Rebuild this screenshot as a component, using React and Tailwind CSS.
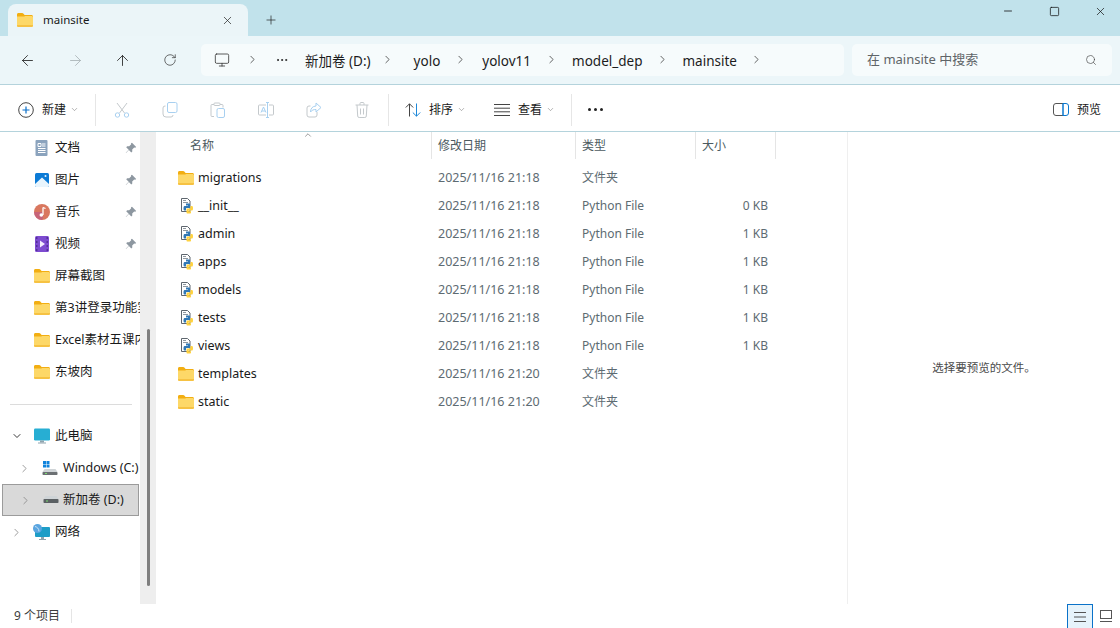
import { ArrowLeft, ArrowRight, ArrowUp, RotateCw, ChevronRight, ChevronDown, ChevronUp, X, Plus, Minus, Square, Search, Monitor, Ellipsis } from "lucide-react";

const FONT = "font-['Noto_Sans','Noto_Sans_CJK_SC',sans-serif]";

const files = [
  { name: "migrations", date: "2025/11/16 21:18", type: "文件夹", folder: true },
  { name: "__init__", date: "2025/11/16 21:18", type: "Python File", size: "0 KB" },
  { name: "admin", date: "2025/11/16 21:18", type: "Python File", size: "1 KB" },
  { name: "apps", date: "2025/11/16 21:18", type: "Python File", size: "1 KB" },
  { name: "models", date: "2025/11/16 21:18", type: "Python File", size: "1 KB" },
  { name: "tests", date: "2025/11/16 21:18", type: "Python File", size: "1 KB" },
  { name: "views", date: "2025/11/16 21:18", type: "Python File", size: "1 KB" },
  { name: "templates", date: "2025/11/16 21:20", type: "文件夹", folder: true },
  { name: "static", date: "2025/11/16 21:20", type: "文件夹", folder: true },
];

function FolderIcon() {
  return (
    <svg width="16" height="14" viewBox="0 0 16 14" className="shrink-0">
      <path d="M0 1.500C0 .7.6 0 1.400 0h3.800c.5 0 .8.2 1.100.5L7.600 2H14.500c.8 0 1.500.7 1.500 1.500V5H0z" fill="#f2ae12" />
      <path d="M0 3.600h6.600c.6 0 1-.2 1.400-.6h6.600c.8 0 1.400.6 1.400 1.400v8.100c0 .8-.6 1.500-1.400 1.500H1.400C.6 14 0 13.300 0 12.500z" fill="#fdd868" />
      <path d="M0 12.500c0 .8.6 1.500 1.400 1.500h13.200c.8 0 1.400-.7 1.400-1.500V12H0z" fill="#f6c243" />
    </svg>
  );
}

function PyIcon() {
  return (
    <svg width="16" height="16" viewBox="0 0 16 16" className="shrink-0">
      <path d="M3.500 .5h6l2.500 2.500v10.500h-8.500z" fill="#fff" stroke="#5e666e" />
      <path d="M5 2.500h3M5 4.500h5" stroke="#8f98a0" />
      <path d="M8 5.500h3c.6 0 1 .4 1 1V10H9c-.6 0-1 .4-1 1v1.500H6.500c-.6 0-1-.6-1-2s.4-2.500 1-2.500H10V7.500H8z" fill="#3178b5" />
      <path d="M12.500 8H14c.6 0 1 .8 1 2.200s-.4 2.300-1 2.300h-3.500v.7h2.500v1.300c0 .6-.4 1-1 1H9.500c-.6 0-1-.4-1-1V11.300c0-.4.300-.8.800-.8H12c.4 0 .5-.3.500-.7z" fill="#ffd23f" />
    </svg>
  );
}

function PinIcon() {
  return (
    <svg width="12" height="12" viewBox="0 0 12 12" className="shrink-0">
      <path d="M7 .8l4.200 4.200-1 .7-1-.2-2 2 .1 2-1 .9L3.900 8 1 11 .8 10.800 3.700 7.700 1.200 5.200l1-1 2 .1 2-2-.2-1z" fill="#8d97a0" />
    </svg>
  );
}

function QuickItem({ icon, label, pinned }) {
  return (
    <div className="h-8 flex items-center pl-[34px] text-[12.5px] text-[#1a1a1a] overflow-hidden whitespace-nowrap">
      <span className="w-4 flex justify-center shrink-0">{icon}</span>
      <span className="ml-[5px] flex-1 overflow-hidden">{label}</span>
      {pinned && <span className="mr-[3px]"><PinIcon /></span>}
    </div>
  );
}

function ToolIcon({ children }) {
  return <span className="w-[48px] flex justify-center items-center">{children}</span>;
}

function Crumb({ children }) {
  return <span className="text-[13.5px] text-[#1c1c1c] leading-none">{children}</span>;
}

function Sep() {
  return <ChevronRight size={13} strokeWidth={1.4} className="text-[#333] shrink-0" />;
}

export default function App() {
  return (
    <div className={`w-[1120px] h-[628px] overflow-hidden flex flex-col bg-white ${FONT}`}>
      {/* title bar */}
      <div className="h-9 shrink-0 bg-[#c1e2eb] flex items-end pl-2">
        <div className="w-[240px] h-8 bg-[#ebf5f8] rounded-t-lg flex items-center pl-[9px] pr-[14px]">
          <FolderIcon />
          <span className="ml-[10px] flex-1 text-[11.5px] text-[#1a1a1a]">mainsite</span>
          <X size={13} strokeWidth={1.3} className="text-[#222]" />
        </div>
        <div className="h-8 ml-4 flex items-center">
          <Plus size={14} strokeWidth={1.2} className="text-[#222]" />
        </div>
        <div className="flex-1 h-9 flex items-start justify-end">
          <span className="w-10 h-[22px] flex items-center justify-center"><Minus size={12} strokeWidth={1.6} className="text-[#111]" /></span>
          <span className="w-[52px] h-[22px] flex items-center justify-center"><Square size={11} strokeWidth={1.6} className="text-[#111]" /></span>
          <span className="w-10 h-[22px] flex items-center justify-center"><X size={13} strokeWidth={1.3} className="text-[#111]" /></span>
        </div>
      </div>

      {/* address row */}
      <div className="h-[49px] shrink-0 bg-[#ecf6f9] border-b border-[#b4d3dc] flex items-center">
        <div className="w-[201px] shrink-0 flex items-center pl-[3px]">
          <span className="w-12 flex justify-center"><ArrowLeft size={17} strokeWidth={1.2} className="text-[#222]" /></span>
          <span className="w-12 flex justify-center"><ArrowRight size={17} strokeWidth={1.2} className="text-[#a9b2b6]" /></span>
          <span className="w-[48px] flex justify-center -ml-[1px]"><ArrowUp size={17} strokeWidth={1.2} className="text-[#222]" /></span>
          <span className="w-[48px] flex justify-center"><RotateCw size={14} strokeWidth={1.2} className="text-[#333]" /></span>
        </div>
        <div className="w-[643px] h-8 shrink-0 bg-[#f6fbfc] rounded-[5px] flex items-center pl-[13px] mb-[1px]">
          <Monitor size={16} strokeWidth={1.2} className="text-[#333]" />
          <span className="ml-[16px]"><Sep /></span>
          <Ellipsis size={14} strokeWidth={1.6} className="ml-[16px] text-[#222]" />
          <span className="ml-[16px]"><Crumb>新加卷 (D:)</Crumb></span>
          <span className="ml-[10px]"><Sep /></span>
          <span className="ml-[20px]"><Crumb>yolo</Crumb></span>
          <span className="ml-[14px]"><Sep /></span>
          <span className="ml-[15px]"><Crumb>yolov11</Crumb></span>
          <span className="ml-[14px]"><Sep /></span>
          <span className="ml-[14px]"><Crumb>model_dep</Crumb></span>
          <span className="ml-[14px]"><Sep /></span>
          <span className="ml-[13px]"><Crumb>mainsite</Crumb></span>
          <span className="ml-[13px]"><Sep /></span>
        </div>
        <div className="w-[260px] h-8 ml-[8px] shrink-0 bg-[#f6fbfc] rounded-[5px] flex items-center justify-between pl-[15px] pr-[15px] mb-[1px]">
          <span className="text-[13px] text-[#5f6568]">在 mainsite 中搜索</span>
          <Search size={12} strokeWidth={1.3} className="text-[#444]" />
        </div>
      </div>

      {/* command bar */}
      <div className="h-[47px] shrink-0 bg-white border-b border-[#b4d3dc] flex items-center pt-[3px]">
        <div className="w-[95px] shrink-0 flex items-center pl-[18px]">
          <svg width="16" height="16" viewBox="0 0 16 16">
            <circle cx="8" cy="8" r="7.300" fill="none" stroke="#444" />
            <path d="M8 4.500v7M4.500 8h7" stroke="#0a6fc9" strokeWidth="1.200" />
          </svg>
          <span className="ml-[8px] text-xs text-[#1a1a1a]">新建</span>
          <ChevronDown size={9} strokeWidth={1.3} className="ml-[4px] text-[#666]" />
        </div>
        <div className="w-px h-8 bg-[#e6e6e6] shrink-0" />
        <div className="flex items-center shrink-0 w-[292px] pl-[2px]">
          <ToolIcon>
            <svg width="16" height="16" viewBox="0 0 16 16" fill="none">
              <path d="M3 1l7.500 10M13 1L5.500 11" stroke="#c4c9cc" />
              <circle cx="3.500" cy="13" r="2.200" stroke="#a8d0f0" />
              <circle cx="12.500" cy="13" r="2.200" stroke="#a8d0f0" />
            </svg>
          </ToolIcon>
          <ToolIcon>
            <svg width="16" height="16" viewBox="0 0 16 16" fill="none">
              <rect x="5.500" y=".5" width="9.500" height="10" rx="1.500" stroke="#a8d0f0" />
              <path d="M3.500 4H3a2 2 0 00-2 2v6a3 3 0 003 3h5a2 2 0 002-2" stroke="#c4c9cc" />
            </svg>
          </ToolIcon>
          <ToolIcon>
            <svg width="16" height="16" viewBox="0 0 16 16" fill="none">
              <path d="M4 2.500H2A1 1 0 001 3.500v10a1 1 0 001 1h2M10 2.500h2a1 1 0 011 1v2" stroke="#c4c9cc" />
              <rect x="4" y="1" width="6" height="2.500" rx=".8" stroke="#c4c9cc" />
              <rect x="7" y="6.500" width="7.500" height="9" rx="1.500" stroke="#a8d0f0" />
            </svg>
          </ToolIcon>
          <ToolIcon>
            <svg width="16" height="16" viewBox="0 0 16 16" fill="none" className="overflow-visible">
              <path d="M8 3H1.500a1 1 0 00-1 1v8a1 1 0 001 1H8M11 3h3.500a1 1 0 011 1v8a1 1 0 01-1 1H11" stroke="#c4c9cc" />
              <path d="M3 10.500L5.500 5 8 10.500M4 9h3" stroke="#a8d0f0" />
              <path d="M8 .5h3M8 15.500h3M9.500 .5v15" stroke="#a8d0f0" />
            </svg>
          </ToolIcon>
          <ToolIcon>
            <svg width="16" height="16" viewBox="0 0 16 16" fill="none">
              <path d="M11 10v3a2 2 0 01-2 2H3a2 2 0 01-2-2V6a2 2 0 012-2h1.500" stroke="#c4c9cc" />
              <path d="M10 1l5 4.500L10 10V7.500c-2.500 0-4 .5-5.500 2.500 0-3.500 2-5.800 5.500-6z" stroke="#a8d0f0" />
            </svg>
          </ToolIcon>
          <ToolIcon>
            <svg width="14" height="16" viewBox="0 0 14 16" fill="none">
              <path d="M.5 3h13M5 3V1.500A1 1 0 016 .5h2a1 1 0 011 1V3M2 3l.7 11a1.500 1.500 0 001.500 1.500h5.600a1.500 1.500 0 001.500-1.500L12 3M5.500 6.500v6M8.500 6.500v6" stroke="#c4c9cc" />
            </svg>
          </ToolIcon>
        </div>
        <div className="w-px h-8 bg-[#e6e6e6] shrink-0" />
        <div className="w-[88px] shrink-0 flex items-center pl-[16px]">
          <svg width="16" height="14" viewBox="0 0 16 14" fill="none">
            <path d="M4.500 13.500V.8M.8 4.500L4.500.8l3.700 3.700" stroke="#444" />
            <path d="M11.500.5v12.700M7.800 9.500l3.700 3.700 3.700-3.700" stroke="#1e88d8" />
          </svg>
          <span className="ml-[8px] text-xs text-[#1a1a1a]">排序</span>
          <ChevronDown size={9} strokeWidth={1.3} className="ml-[4px] text-[#666]" />
        </div>
        <div className="w-[94px] shrink-0 flex items-center pl-[17px]">
          <svg width="16" height="12" viewBox="0 0 16 12" fill="none">
            <path d="M0 .5h16M0 4.200h16M0 7.800h16M0 11.500h16" stroke="#444" />
          </svg>
          <span className="ml-[8px] text-xs text-[#1a1a1a]">查看</span>
          <ChevronDown size={9} strokeWidth={1.3} className="ml-[4px] text-[#666]" />
        </div>
        <div className="w-px h-8 bg-[#e6e6e6] shrink-0" />
        <div className="flex-1 flex items-center pl-[16px]">
          <span className="flex gap-[3px]">
            <span className="w-[3px] h-[3px] rounded-full bg-[#222]" />
            <span className="w-[3px] h-[3px] rounded-full bg-[#222]" />
            <span className="w-[3px] h-[3px] rounded-full bg-[#222]" />
          </span>
        </div>
        <div className="flex items-center pr-[19px]">
          <svg width="16" height="13" viewBox="0 0 16 13" fill="none">
            <path d="M10 .5H3A2.500 2.500 0 00.5 3v7A2.500 2.500 0 003 12.500h7" stroke="#555" />
            <path d="M10 .5h3A2.500 2.500 0 0115.500 3v7a2.500 2.500 0 01-2.500 2.500h-3zM10 .5v12" stroke="#0a78d0" />
          </svg>
          <span className="ml-[8px] text-xs text-[#1a1a1a]">预览</span>
        </div>
      </div>

      {/* body */}
      <div className="flex-1 min-h-0 flex">
        {/* nav pane */}
        <div className="w-[140px] shrink-0 flex flex-col overflow-hidden">
          <QuickItem pinned label="文档" icon={
            <svg width="14" height="16" viewBox="0 0 14 16"><rect x=".5" y="0" width="12" height="16" rx="1" fill="#8ba3bd" /><path d="M3 3.500h3v3H3zM7 4h3.500M7 6h3.500M3 8.500h7.500M3 10.500h7.500M3 12.500h7.500" stroke="#fff" fill="none" /></svg>
          } />
          <QuickItem pinned label="图片" icon={
            <svg width="14" height="14" viewBox="0 0 14 14"><rect width="14" height="14" rx="1.500" fill="#0c7bd6" /><path d="M0 11l7-6.500 7 6.500v1.500A1.500 1.500 0 0112.500 14h-11A1.500 1.500 0 010 12.500z" fill="#e9f5fd" /><circle cx="10.500" cy="3" r="1" fill="#e9f5fd" /></svg>
          } />
          <QuickItem pinned label="音乐" icon={
            <svg width="16" height="16" viewBox="0 0 16 16"><circle cx="8" cy="8" r="8" fill="#d9775f" /><path d="M8 8a8 8 0 010 8 8 8 0 01-8-8z" fill="#bf5d84" opacity=".7" /><path d="M9 3.500v7.500" stroke="#fff" strokeWidth="1.300" /><circle cx="7.300" cy="11" r="1.800" fill="#fff" /><path d="M9 3.500l2.500 1" stroke="#fff" strokeWidth="1.300" /></svg>
          } />
          <QuickItem pinned label="视频" icon={
            <svg width="14" height="16" viewBox="0 0 14 16"><rect width="14" height="16" rx="1.500" fill="#7d4bd0" /><path d="M5 4.500l5 3.500-5 3.500z" fill="#f3ecff" /><path d="M1 2h1.500M1 6h1.500M1 10h1.500M1 14h1.500M11.500 2H13M11.500 6H13M11.500 10H13M11.500 14H13" stroke="#2c1860" /></svg>
          } />
          <QuickItem label="屏幕截图" icon={<FolderIcon />} />
          <QuickItem label="第3讲登录功能实现" icon={<FolderIcon />} />
          <QuickItem label="Excel素材五课内容" icon={<FolderIcon />} />
          <QuickItem label="东坡肉" icon={<FolderIcon />} />
          <div className="h-px bg-[#dcdcdc] ml-[10px] mr-[8px] mt-[16px] mb-[15px] shrink-0" />
          <div className="h-8 flex items-center pl-[11px] text-[12.500px] text-[#1a1a1a] whitespace-nowrap">
            <ChevronDown size={12} strokeWidth={1.8} className="text-[#222]" />
            <svg width="16" height="16" viewBox="0 0 16 16" className="ml-[11px] shrink-0"><rect y=".5" width="16" height="12" rx="1.200" fill="#27aed3" /><rect x="6" y="12.500" width="4" height="2" fill="#8fa3ad" /><rect x="4" y="14.500" width="8" height="1" fill="#8fa3ad" /></svg>
            <span className="ml-[5px]">此电脑</span>
          </div>
          <div className="h-8 flex items-center pl-[18px] text-[12.500px] text-[#1a1a1a] whitespace-nowrap overflow-hidden">
            <ChevronRight size={13} strokeWidth={1.5} className="text-[#888] shrink-0" />
            <svg width="16" height="15" viewBox="0 0 16 15" className="ml-[11px] shrink-0"><path d="M1 0h3v3H1zM4.500 0h3v3h-3zM1 3.500h3v3H1zM4.500 3.500h3v3h-3z" fill="#0f83dc" /><path d="M2.500 8h11l2 3H.5z" fill="#cfd4d7" /><rect x=".5" y="11" width="15" height="3" rx=".8" fill="#6b7073" /><rect x="3" y="12" width="2" height="1" fill="#7ddc70" /></svg>
            <span className="ml-[5px]">Windows (C:)</span>
          </div>
          <div className="h-8 ml-[2px] mr-[1px] -mb-px flex items-center pl-[16px] bg-[#d9d9d9] border border-[#9b9b9b] text-[12.500px] text-[#1a1a1a] whitespace-nowrap shrink-0">
            <ChevronRight size={13} strokeWidth={1.5} className="text-[#888] shrink-0" />
            <svg width="16" height="8" viewBox="0 0 16 8" className="ml-[11px] shrink-0"><path d="M2.500 0h11l2 3H.5z" fill="#cfd4d7" /><rect x=".5" y="3" width="15" height="4" rx=".8" fill="#5b6063" /><rect x="3" y="4.500" width="2" height="1" fill="#7ddc70" /></svg>
            <span className="ml-[4px]">新加卷 (D:)</span>
          </div>
          <div className="h-8 mt-px flex items-center pl-[10px] text-[12.500px] text-[#1a1a1a] whitespace-nowrap">
            <ChevronRight size={13} strokeWidth={1.5} className="text-[#888] shrink-0" />
            <svg width="17" height="16" viewBox="0 0 17 16" className="ml-[10px] shrink-0"><rect x="2" y="3" width="15" height="10" rx="1" fill="#1d9dc7" /><rect x="8" y="13" width="3" height="2" fill="#8fa3ad" /><rect x="6" y="15" width="7" height="1" fill="#8fa3ad" /><circle cx="4.500" cy="4.500" r="4.500" fill="#5aa5e0" /><path d="M2 2.500c2 .5 4 2 4 5" stroke="#cfe6f7" fill="none" /></svg>
            <span className="ml-[5px]">网络</span>
          </div>
        </div>

        {/* nav scrollbar */}
        <div className="w-4 shrink-0 h-[472px] bg-[#eeeeee] flex flex-col items-center pt-[197px]">
          <div className="w-[3px] h-[257px] rounded-sm bg-[#7f7f7f]" />
        </div>

        {/* file list */}
        <div className="w-[691px] shrink-0 relative">
          <ChevronUp size={10} strokeWidth={1.4} className="absolute left-[147px] -top-[2px] text-[#555]" />
          <div className="h-[27px] flex text-xs text-[#4c5a60]">
            <div className="w-[276px] h-full border-r border-[#e5e5e5] pl-[34px] flex items-center">名称</div>
            <div className="w-[144px] h-full border-r border-[#e5e5e5] pl-[6px] flex items-center">修改日期</div>
            <div className="w-[120px] h-full border-r border-[#e5e5e5] pl-[6px] flex items-center">类型</div>
            <div className="w-[80px] h-full border-r border-[#e5e5e5] pl-[6px] flex items-center">大小</div>
          </div>
          <div className="pt-[5px]">
            {files.map((f) => (
              <div key={f.name} className="h-7 flex items-center text-[12.500px]">
                <div className="w-[275px] flex items-center pl-[22px] text-[#1a1a1a]">
                  {f.folder ? <FolderIcon /> : <PyIcon />}
                  <span className="ml-[4px]">{f.name}</span>
                </div>
                <div className="w-[145px] pl-[7px] text-[12.500px] text-[#5d6b72]">{f.date}</div>
                <div className="w-[120px] pl-[6px] text-xs text-[#5d6b72]">{f.type}</div>
                <div className="w-[72px] text-right text-xs text-[#5d6b72]">{f.size}</div>
              </div>
            ))}
          </div>
        </div>

        {/* preview pane */}
        <div className="flex-1 border-l border-[#efefef] flex items-center justify-center h-[472px]">
          <span className="text-[11.500px] text-[#4a4a4a]">选择要预览的文件。</span>
        </div>
      </div>

      {/* status bar */}
      <div className="h-6 shrink-0 flex items-center relative">
        <span className="ml-[14px] text-xs text-[#3c3c3c]">9 个项目</span>
        <div className="ml-[11px] w-px h-[14px] bg-[#e5e5e5]" />
        <div className="ml-auto flex items-center self-stretch pr-[1px]">
          <div className="w-[26px] h-[25px] mt-[1px] bg-[#e6f3fb] border-x-[1.500px] border-t-[1.500px] border-[#0a72c9] flex items-center justify-center">
            <svg width="12" height="10" viewBox="0 0 12 10"><path d="M0 .5h12M0 5h12M0 9.500h12" stroke="#555" /></svg>
          </div>
          <div className="w-[26px] flex items-center justify-center">
            <svg width="12" height="12" viewBox="0 0 12 12" fill="none"><rect x=".5" y=".5" width="11" height="8" stroke="#555" /><path d="M0 11.500h12" stroke="#555" /></svg>
          </div>
        </div>
      </div>
    </div>
  );
}
